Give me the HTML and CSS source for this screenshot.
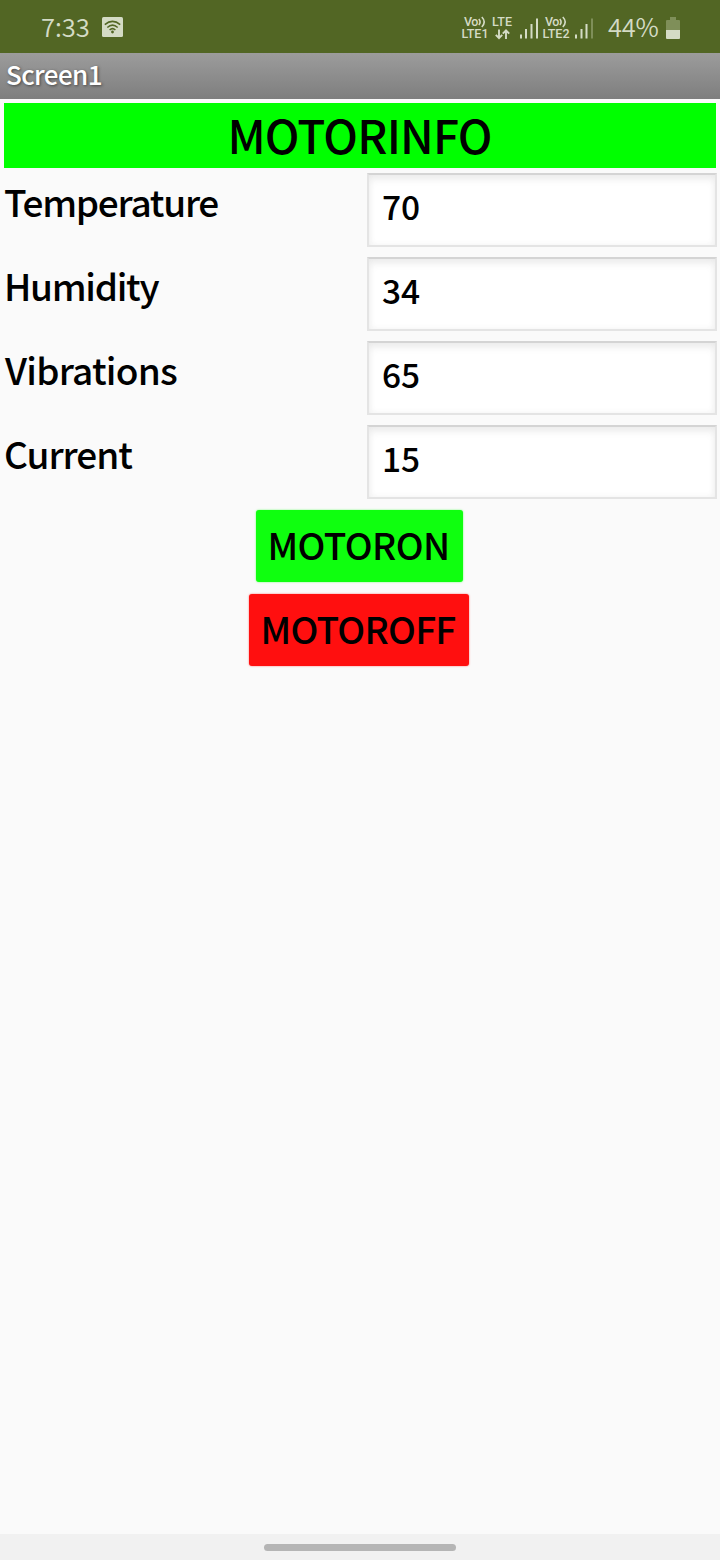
FILE: index.html
```html
<!DOCTYPE html>
<html lang="en">
<head>
<meta charset="utf-8">
<title>Screen1</title>
<link rel="stylesheet" href="styles.css">
</head>
<body>
<header class="status">
  <span class="clock">7:33</span>
  <svg class="wifi" width="21" height="20" viewBox="0 0 21 20"><rect width="21" height="20" rx="1.5" fill="#d4dbc5"/><g fill="none" stroke="#526624" stroke-width="1.5"><path d="M2.8 7.6Q10.5 1.2 18.2 7.6M5.3 10.5Q10.5 5.8 15.7 10.5M7.6 13Q10.5 10.3 13.4 13"/></g><circle cx="10.5" cy="15" r="1.4" fill="#526624"/></svg>
  <div class="net net-one"><span class="vo">Vo<svg width="8" height="12" viewBox="0 0 8 12"><path d="M.8 3Q3.4 6 .8 9M3.8 1Q8.6 6 3.8 11" fill="none" stroke="#d4dbc5" stroke-width="1.6"/></svg></span><span>LTE1</span></div>
  <div class="net net-lte"><span>LTE</span><svg width="15" height="12" viewBox="0 0 15 12"><path d="M4 1.5V10M.8 6.8L4 10.2L7.2 6.8M11 11V2.5M7.8 5.7L11 2.3L14.2 5.7" fill="none" stroke="#d4dbc5" stroke-width="1.9"/></svg></div>
  <svg class="signal signal-one" width="19" height="21" viewBox="0 0 19 21"><path d="M1 16.5V20.5M6 11V20.5M11.5 6V20.5M17 .5V20.5" stroke="#d4dbc5" stroke-width="2"/></svg>
  <div class="net net-two"><span class="vo">Vo<svg width="8" height="12" viewBox="0 0 8 12"><path d="M.8 3Q3.4 6 .8 9M3.8 1Q8.6 6 3.8 11" fill="none" stroke="#d4dbc5" stroke-width="1.6"/></svg></span><span>LTE2</span></div>
  <svg class="signal signal-two" width="19" height="21" viewBox="0 0 19 21"><path d="M1 16.5V20.5M6.5 11V20.5M11.5 6V20.5" stroke="#d4dbc5" stroke-width="2"/><path d="M17 .5V20.5" stroke="#7f8f59" stroke-width="2"/></svg>
  <span class="percent">44%</span>
  <svg class="battery" width="14" height="22" viewBox="0 0 14 22"><path d="M4 0H10V3H13Q14 3 14 4V13H0V4Q0 3 1 3H4Z" fill="#7f8f59"/><path d="M0 13H14V21Q14 22 13 22H1Q0 22 0 21Z" fill="#d4dbc5"/></svg>
</header>
<div class="appbar"><span class="appname">Screen1</span></div>
<main class="screen">
  <h1 class="banner"><span>MOTORINFO</span></h1>
  <div class="row"><label class="label temperature">Temperature</label><div class="field">70</div></div>
  <div class="row"><label class="label humidity">Humidity</label><div class="field">34</div></div>
  <div class="row"><label class="label vibrations">Vibrations</label><div class="field">65</div></div>
  <div class="row"><label class="label current">Current</label><div class="field">15</div></div>
  <div class="actions">
    <button class="btn on">MOTORON</button>
    <button class="btn off">MOTOROFF</button>
  </div>
</main>
<footer class="navbar"><div class="handle"></div></footer>
</body>
</html>
```
FILE: styles.css
```css
* { box-sizing: border-box; }
body {
  margin: 0;
  width: 720px;
  height: 1560px;
  display: flex;
  flex-direction: column;
  overflow: hidden;
  background: #fafafa;
  color: #000;
  font-family: "Noto Sans CJK JP", "Noto Sans", sans-serif;
  font-weight: 500;
}
.status {
  height: 53px;
  flex: none;
  display: flex;
  align-items: flex-start;
  padding-left: 41px;
  background: #526624;
  color: #d4dbc5;
}
.status svg { display: block; flex: none; }
.clock { width: 49px; margin-right: 12px; font-size: 25.5px; line-height: 51px; font-weight: 350; white-space: nowrap; }
.wifi { margin-top: 17px; }
.net {
  display: flex;
  flex-direction: column;
  align-items: center;
  margin-top: 16px;
  font: 500 12.5px/12px Roboto, sans-serif;
  white-space: nowrap;
}
.vo { display: flex; align-items: center; letter-spacing: -.4px; }
.net-one { width: 28px; margin-left: 338px; }
.net-lte { width: 22px; margin-left: 2px; }
.signal { margin-top: 18px; }
.signal-one { margin-left: 7px; }
.net-two { width: 28px; margin-left: 3px; }
.signal-two { margin-left: 5px; }
.percent { width: 51px; margin-left: 14px; font-size: 25.5px; line-height: 51px; font-weight: 350; letter-spacing: -.3px; white-space: nowrap; }
.battery { margin: 17px 0 0 7px; }
.appbar {
  height: 46px;
  flex: none;
  padding-left: 6px;
  background: linear-gradient(#9c9c9c, #7e7e7e);
  color: #fff;
  font-size: 26px;
  line-height: 42px;
  letter-spacing: -.6px;
  text-shadow: 1px 1px 3px #444;
}
.screen { flex: 1; padding-top: 4px; }
.banner {
  height: 65px;
  margin: 0 4px 2px;
  padding-right: 1px;
  background: #0f0;
  font-size: 46px;
  line-height: 62px;
  font-weight: 500;
  letter-spacing: -.8px;
  text-align: center;
}
.row { height: 84px; display: flex; justify-content: space-between; padding: 0 3px 0 4px; }
.label { font-size: 37px; line-height: 62px; }
.temperature { letter-spacing: -1.25px; }
.humidity { letter-spacing: -1.3px; }
.vibrations { letter-spacing: -.75px; padding-left: 1px; }
.current { letter-spacing: -1px; }
.field {
  width: 350px;
  height: 74px;
  margin-top: 3px;
  padding-left: 13px;
  border: 2px solid #e4e4e4;
  border-top-color: #d4d4d4;
  background: #fff;
  box-shadow: inset 0 5px 10px -2px #e8e8e8, inset 0 0 7px #f4f4f4;
  font-size: 33.5px;
  line-height: 62px;
}
.actions { display: flex; flex-direction: column; align-items: center; gap: 12px; padding: 4px 1px 0 0; }
.btn {
  height: 72px;
  padding: 0 2px 4px 0;
  border: 0;
  border-radius: 3px;
  font: inherit;
  font-size: 37px;
  line-height: 68px;
  white-space: nowrap;
}
.on { width: 207px; background: #0fff0f; box-shadow: 0 0 2px #6f6; letter-spacing: -.6px; }
.off { width: 220px; margin-right: 1px; background: #ff0f0f; box-shadow: 0 0 2px #f66; letter-spacing: -.75px; }
.navbar { height: 26px; flex: none; display: flex; justify-content: center; padding-top: 10px; background: #f1f1f1; }
.handle { width: 192px; height: 7px; border-radius: 4px; background: #b5b5b5; }
```
